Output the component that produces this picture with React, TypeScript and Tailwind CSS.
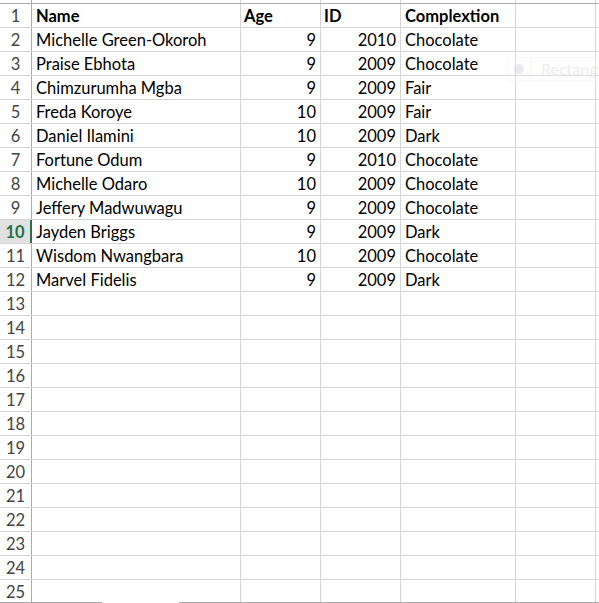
import React from "react";

const rows: [string, string, string, string][] = [
  ["Name", "Age", "ID", "Complextion"],
  ["Michelle Green-Okoroh", "9", "2010", "Chocolate"],
  ["Praise Ebhota", "9", "2009", "Chocolate"],
  ["Chimzurumha Mgba", "9", "2009", "Fair"],
  ["Freda Koroye", "10", "2009", "Fair"],
  ["Daniel Ilamini", "10", "2009", "Dark"],
  ["Fortune Odum", "9", "2010", "Chocolate"],
  ["Michelle Odaro", "10", "2009", "Chocolate"],
  ["Jeffery Madwuwagu", "9", "2009", "Chocolate"],
  ["Jayden Briggs", "9", "2009", "Dark"],
  ["Wisdom Nwangbara", "10", "2009", "Chocolate"],
  ["Marvel Fidelis", "9", "2009", "Dark"],
];

const font = { fontFamily: "Lato, 'Liberation Sans', sans-serif" };

function Row({ n, data }: { n: number; data?: [string, string, string, string] }) {
  const selected = n === 10;
  const bold = n === 1;
  const cell = "h-full flex items-end pb-[1px] border-r border-[#d4d4d4] shrink-0 whitespace-nowrap overflow-visible";
  return (
    <div className="flex h-[24px] border-b border-[#d4d4d4] text-[16.5px] leading-[20px] text-black">
      <div
        className={
          selected
            ? "h-full w-[32px] shrink-0 flex items-end justify-center pb-[1px] bg-[#e1e1e1] border-r-2 border-[#217346] text-[#217346] font-bold"
            : "h-full w-[32px] shrink-0 flex items-end justify-center pb-[1px] border-r border-[#ababab] text-[#444444]"
        }
      >
        {n}
      </div>
      <div className={`${cell} w-[209px] pl-[4px] ${bold ? "font-bold" : ""}`}>{data?.[0]}</div>
      <div className={`${cell} w-[80px] ${bold ? "font-bold pl-[3px]" : "justify-end pr-[4px]"}`}>{data?.[1]}</div>
      <div className={`${cell} w-[80px] ${bold ? "font-bold pl-[3px]" : "justify-end pr-[4px]"}`}>{data?.[2]}</div>
      <div className={`${cell} w-[115px] pl-[4px] ${bold ? "font-bold" : ""}`}>{data?.[3]}</div>
      <div className={`${cell} w-[80px]`}></div>
      <div className={`${cell} w-[80px]`}></div>
    </div>
  );
}

export default function App() {
  const nums = Array.from({ length: 25 }, (_, i) => i + 1);
  return (
    <div className="relative w-[599px] h-[603px] overflow-hidden bg-white" style={font}>
      <div className="flex h-[4px] border-b border-[#ababab]">
        <div className="h-full w-[32px] shrink-0 border-r border-[#ababab]" />
        <div className="h-full w-[209px] shrink-0 border-r border-[#d4d4d4]" />
        <div className="h-full w-[80px] shrink-0 border-r border-[#d4d4d4]" />
        <div className="h-full w-[80px] shrink-0 border-r border-[#d4d4d4]" />
        <div className="h-full w-[115px] shrink-0 border-r border-[#d4d4d4]" />
        <div className="h-full w-[80px] shrink-0 border-r border-[#d4d4d4]" />
      </div>
      {nums.map((n) => (
        <Row key={n} n={n} data={rows[n - 1]} />
      ))}
      <div className="absolute left-0 bottom-0 w-full h-[1px] flex">
        <div className="h-full w-[102px] bg-[#ababab]" />
        <div className="h-full w-[77px] bg-white" />
        <div className="h-full flex-1 bg-[#ababab]" />
      </div>
      <div className="absolute left-[507px] top-[57px] w-[92px] h-[24px] rounded-l-[2px] border border-r-0 border-[#f2f2f2] bg-white/40 flex items-center opacity-60 overflow-hidden">
        <div className="w-[10px] h-[10px] rounded-full bg-[#dcdce6] ml-[6px] shrink-0" />
        <div className="h-full w-[1px] bg-[#f0f0f0] ml-[6px] shrink-0" />
        <div className="ml-[10px] text-[16px] text-[#e2e2e2] whitespace-nowrap">Rectangu</div>
      </div>
    </div>
  );
}
